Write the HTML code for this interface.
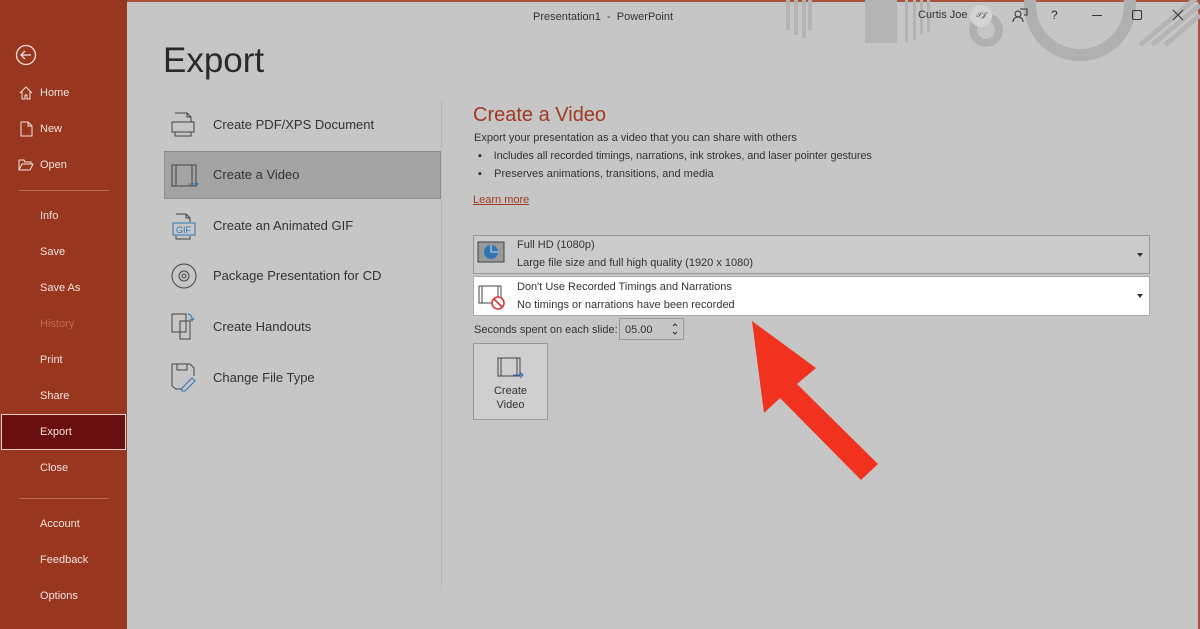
<!DOCTYPE html>
<html><head><meta charset="utf-8"><style>
*{margin:0;padding:0;box-sizing:border-box}
body{width:1200px;height:629px;overflow:hidden;background:#c6c6c6;font-family:"Liberation Sans",sans-serif;position:relative;color:#333}
#side{position:absolute;left:0;top:0;width:127px;height:629px;background:#98361f;color:#f1e3de;font-size:11px}
#side div.i{position:absolute;left:40px}
.hr{position:absolute;left:19px;width:90px;height:1px;background:#b86a58}
.ab{position:absolute}
.ml{position:absolute;left:213px;font-size:13px;color:#333}
.sm{font-size:11px}
</style></head><body>
<div id="side">
<svg class="ab" style="left:14px;top:43px" width="24" height="24"><circle cx="12" cy="12" r="9.5" fill="none" stroke="#f1e3de" stroke-width="1.3"/><path d="M17 12H7M11 8l-4 4 4 4" fill="none" stroke="#f1e3de" stroke-width="1.3"/></svg>
<svg class="ab" style="left:18px;top:85px" width="16" height="16"><path d="M2 8L8 2l6 6M4 6v8h3v-4h2v4h3V6" fill="none" stroke="#f1e3de"/></svg>
<svg class="ab" style="left:19px;top:121px" width="16" height="16"><path d="M2 1h7l4 4v10H2zM9 1v4h4" fill="none" stroke="#f1e3de"/></svg>
<svg class="ab" style="left:18px;top:157px" width="16" height="16"><path d="M1 3h5l1 2h6v2M1 3v10h11l3-6H4l-3 6" fill="none" stroke="#f1e3de"/></svg>
<div class="i" style="top:87px">Home</div>
<div class="i" style="top:123px">New</div>
<div class="i" style="top:159px">Open</div>
<div class="hr" style="top:190px"></div>
<div class="i" style="top:210px">Info</div>
<div class="i" style="top:246px">Save</div>
<div class="i" style="top:282px">Save As</div>
<div class="i" style="top:318px;color:#c06a55">History</div>
<div class="i" style="top:354px">Print</div>
<div class="i" style="top:390px">Share</div>
<div class="ab" style="left:1px;top:414px;width:125px;height:36px;background:#6a0f0f;border:1px solid #e8d0c8"></div>
<div class="i" style="top:426px">Export</div>
<div class="i" style="top:462px">Close</div>
<div class="hr" style="top:498px"></div>
<div class="i" style="top:518px">Account</div>
<div class="i" style="top:554px">Feedback</div>
<div class="i" style="top:590px">Options</div>
</div>
<div class="ab" style="left:127px;top:0;width:1073px;height:2px;background:#a9543f"></div>
<div class="ab" style="left:1198px;top:0;width:2px;height:629px;background:#a9543f"></div>
<!-- decor -->
<svg class="ab" style="left:780px;top:0" width="420" height="70">
<g fill="#b4b4b4"><rect x="6" y="0" width="4" height="30"/><rect x="14" y="0" width="4" height="35"/><rect x="22" y="0" width="4" height="38"/><rect x="28" y="0" width="4" height="30"/><rect x="85" y="0" width="32" height="43"/><rect x="125" y="0" width="3" height="42"/><rect x="133" y="0" width="3" height="40"/><rect x="140" y="0" width="3" height="35"/><rect x="147" y="0" width="3" height="32"/></g>
<circle cx="206" cy="30" r="13" fill="none" stroke="#b0b0b0" stroke-width="8"/>
<circle cx="300" cy="5" r="50" fill="none" stroke="#b0b0b0" stroke-width="12"/>
<g stroke="#b4b4b4" stroke-width="5"><path d="M360 45L420 -5M372 45L420 5M385 45L420 15"/></g>
</svg>
<div class="ab" style="left:533px;top:11px;font-size:11px;color:#333">Presentation1 &nbsp;- &nbsp;PowerPoint</div>
<div class="ab" style="left:918px;top:9px;font-size:11px;color:#333">Curtis Joe</div>
<div class="ab" style="left:970px;top:5px;width:22px;height:22px;border-radius:50%;background:#d4d4d4;font-size:7px;text-align:center;line-height:22px;font-style:italic">𝒮𝒥</div>
<svg class="ab" style="left:1012px;top:7px" width="16" height="16"><circle cx="6" cy="7" r="3" fill="none" stroke="#333"/><path d="M1 15c0-3 2-5 5-5s5 2 5 5M8 2h7v6h-3" fill="none" stroke="#333"/></svg>
<div class="ab" style="left:1051px;top:8px;font-size:12px">?</div>
<div class="ab" style="left:1092px;top:15px;width:10px;height:1px;background:#333"></div>
<div class="ab" style="left:1132px;top:10px;width:10px;height:10px;border:1px solid #333;border-radius:2px"></div>
<svg class="ab" style="left:1172px;top:9px" width="12" height="12"><path d="M1 1l10 10M11 1L1 11" stroke="#333"/></svg>

<div class="ab" style="left:163px;top:41px;font-size:35px;color:#2a2a2a">Export</div>
<div class="ab" style="left:441px;top:100px;width:1px;height:490px;background:#b8b8b8"></div>
<div class="ab" style="left:164px;top:151px;width:277px;height:48px;background:#a3a3a3;border:1px solid #8e8e8e"></div>
<svg class="ab" style="left:170px;top:110px" width="28" height="30" fill="none" stroke="#444"><path d="M5 3h12l4 4v5M17 3v4h4M2 12h22v10H2zM5 22v4h16v-4"/></svg>
<svg class="ab" style="left:170px;top:162px" width="30" height="28" fill="none" stroke="#444"><path d="M2 3h24v21H2zM6 3v21M22 3v21"/><path d="M18 22h10M25 19l3 3-3 3" stroke="#2e75b6"/></svg>
<svg class="ab" style="left:170px;top:212px" width="28" height="28" fill="none" stroke="#444"><path d="M6 2h10l4 4v4M16 2v4h4M6 24v3h14v-3"/><rect x="3" y="11" width="22" height="12" stroke="#2e75b6"/><text x="6" y="21" font-size="9" fill="#2e75b6" stroke="none" font-family="Liberation Sans">GIF</text></svg>
<svg class="ab" style="left:170px;top:262px" width="28" height="28" fill="none" stroke="#444"><circle cx="14" cy="14" r="12"/><circle cx="14" cy="14" r="5"/><circle cx="14" cy="14" r="2"/></svg>
<svg class="ab" style="left:170px;top:311px" width="28" height="30" fill="none" stroke="#444"><path d="M2 3h14v18H2zM10 10h10v18H10z"/><path d="M18 3a5 5 0 0 1 4 6M20 8l2 2 2-3" stroke="#2e75b6"/></svg>
<svg class="ab" style="left:170px;top:362px" width="28" height="30" fill="none" stroke="#444"><path d="M2 2h18l4 4v8M2 2v22l4 3h6M7 2v6h10V2"/><path d="M12 26l10-10 3 3-10 10h-3z" stroke="#2e75b6"/></svg>
<div class="ml" style="top:117px">Create PDF/XPS Document</div>
<div class="ml" style="top:167px">Create a Video</div>
<div class="ml" style="top:218px">Create an Animated GIF</div>
<div class="ml" style="top:268px">Package Presentation for CD</div>
<div class="ml" style="top:319px">Create Handouts</div>
<div class="ml" style="top:370px">Change File Type</div>

<div class="ab" style="left:473px;top:104px;font-size:20px;color:#a23a22">Create a Video</div>
<div class="ab sm" style="left:474px;top:132px">Export your presentation as a video that you can share with others</div>
<div class="ab sm" style="left:478px;top:150px;letter-spacing:-0.1px">▪&nbsp;&nbsp;&nbsp;&nbsp;Includes all recorded timings, narrations, ink strokes, and laser pointer gestures</div>
<div class="ab sm" style="left:478px;top:168px">▪&nbsp;&nbsp;&nbsp;&nbsp;Preserves animations, transitions, and media</div>
<div class="ab sm" style="left:473px;top:194px;color:#a23a22;text-decoration:underline">Learn more</div>

<div class="ab" style="left:473px;top:235px;width:677px;height:39px;border:1px solid #999;background:#cbcbcb"></div>
<svg class="ab" style="left:477px;top:241px" width="28" height="24"><rect x="1" y="1" width="26" height="20" fill="#999" stroke="#444"/><circle cx="14" cy="11" r="7" fill="#2e75b6"/><path d="M14 4v7h7" stroke="#ddd" fill="none"/></svg>
<div class="ab sm" style="left:517px;top:239px">Full HD (1080p)</div>
<div class="ab sm" style="left:517px;top:257px">Large file size and full high quality (1920 x 1080)</div>
<div class="ab" style="left:1137px;top:253px;border:3px solid transparent;border-top:4px solid #333"></div>
<div class="ab" style="left:473px;top:276px;width:677px;height:40px;border:1px solid #aaa;background:#fff"></div>
<svg class="ab" style="left:477px;top:283px" width="30" height="28" fill="none" stroke="#444"><path d="M2 3h22v17H2zM5 3v17M21 3v17"/><circle cx="21" cy="20" r="6" stroke="#d23c3c" stroke-width="1.6" fill="#fff"/><path d="M17 16l8 8" stroke="#d23c3c" stroke-width="1.6"/></svg>
<div class="ab sm" style="left:517px;top:281px">Don't Use Recorded Timings and Narrations</div>
<div class="ab sm" style="left:517px;top:299px">No timings or narrations have been recorded</div>
<div class="ab" style="left:1137px;top:294px;border:3px solid transparent;border-top:4px solid #333"></div>
<div class="ab sm" style="left:474px;top:324px">Seconds spent on each slide:</div>
<div class="ab sm" style="left:619px;top:318px;width:65px;height:22px;border:1px solid #999;padding:5px 0 0 5px">05.00</div>
<svg class="ab" style="left:671px;top:321px" width="8" height="16" fill="none" stroke="#333"><path d="M2 5l2-2 2 2M2 11l2 2 2-2"/></svg>
<div class="ab" style="left:473px;top:343px;width:75px;height:77px;border:1px solid #999;background:#cfcfcf;text-align:center;font-size:11px;padding-top:40px;line-height:14px">Create<br>Video</div>
<svg class="ab" style="left:496px;top:356px" width="30" height="26" fill="none" stroke="#444"><path d="M2 2h22v18H2zM5 2v18M21 2v18"/><path d="M17 19h10M24 16l3 3-3 3" stroke="#2e75b6"/></svg>
<svg class="ab" style="left:740px;top:310px" width="150" height="180"><polygon points="12,11 24,103 40,88 121,170 138,154 57,74 76,58" fill="#f0321e"/></svg>
</body></html>
